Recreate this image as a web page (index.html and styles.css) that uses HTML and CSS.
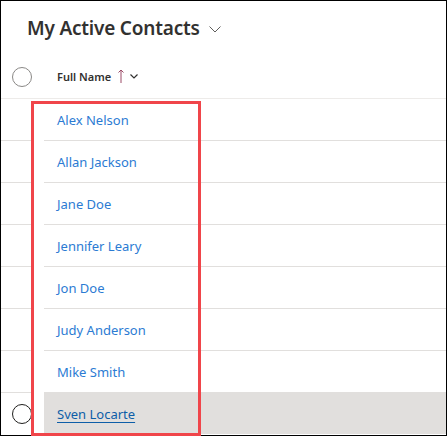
FILE: index.html
```html
<!DOCTYPE html>
<html>
<head>
<meta charset="utf-8">
<link rel="stylesheet" href="styles.css">
</head>
<body>
<div class="frame">
  <div class="title-bar">
    <span class="title">My Active Contacts</span>
    <svg class="title-chev" width="12" height="7" viewBox="0 0 12 7"><path d="M0.5 0.5 L6 6 L11.5 0.5" fill="none" stroke="#605e5c" stroke-width="1"/></svg>
  </div>
  <div class="col-head">
    <div class="check-cell"><span class="circle"></span></div>
    <div class="head-cell">
      <span class="head-label">Full Name</span>
      <svg class="sort-arrow" width="6" height="14" viewBox="0 0 6 14"><path d="M3 14 V1 M0.5 3.5 L3 1 L5.5 3.5" fill="none" stroke="#9b4a66" stroke-width="1"/></svg>
      <svg class="head-chev" width="8" height="5" viewBox="0 0 8 5"><path d="M0.5 0.5 L4 4 L7.5 0.5" fill="none" stroke="#323130" stroke-width="1.2"/></svg>
    </div>
  </div>
  <div class="row"><div class="check-cell"></div><div class="name-cell"><a class="name">Alex Nelson</a></div></div>
  <div class="row"><div class="check-cell"></div><div class="name-cell"><a class="name">Allan Jackson</a></div></div>
  <div class="row"><div class="check-cell"></div><div class="name-cell"><a class="name">Jane Doe</a></div></div>
  <div class="row"><div class="check-cell"></div><div class="name-cell"><a class="name">Jennifer Leary</a></div></div>
  <div class="row"><div class="check-cell"></div><div class="name-cell"><a class="name">Jon Doe</a></div></div>
  <div class="row"><div class="check-cell"></div><div class="name-cell"><a class="name">Judy Anderson</a></div></div>
  <div class="row"><div class="check-cell"></div><div class="name-cell"><a class="name">Mike Smith</a></div></div>
  <div class="row row-hover"><div class="check-cell"><span class="circle circle-dark"></span></div><div class="name-cell"><a class="name name-hover">Sven Locarte</a></div></div>
</div>
<div class="highlight"></div>
</body>
</html>
```

FILE: styles.css
```css
html, body {
  margin: 0;
  padding: 0;
  background: #ffffff;
}
body {
  position: relative;
  width: 448px;
  height: 437px;
  font-family: "Noto Sans", "Open Sans", sans-serif;
  color: #323130;
}
.frame {
  width: 447px;
  height: 436px;
  box-sizing: border-box;
  border: 1px solid #000000;
  display: flex;
  flex-direction: column;
}
.title-bar {
  height: 54px;
  display: flex;
  align-items: center;
  padding-left: 26px;
  gap: 9px;
}
.title {
  font-size: 19px;
  font-weight: 600;
  color: #323130;
  letter-spacing: -0.2px;
}
.title-chev {
  margin-top: 2px;
}
.col-head {
  height: 43px;
  display: flex;
  align-items: stretch;
  border-bottom: 1px solid #edebe9;
}
.check-cell {
  width: 33px;
  margin-right: 10px;
  display: flex;
  align-items: center;
  justify-content: flex-start;
  padding-left: 11px;
  box-sizing: border-box;
  flex: none;
}
.col-head .check-cell {
  width: 43px;
  margin-right: 0;
}
.circle {
  display: block;
  width: 20px;
  height: 20px;
  box-sizing: border-box;
  border: 1px solid #8a8886;
  border-radius: 50%;
}
.circle-dark {
  border-color: #201f1e;
}
.head-cell {
  flex: 1;
  display: flex;
  align-items: center;
  padding-left: 13px;
}
.head-label {
  font-size: 11px;
  font-weight: 600;
  color: #323130;
}
.sort-arrow {
  margin-left: 7px;
  margin-top: -1px;
}
.head-chev {
  margin-left: 6px;
}
.row {
  height: 42px;
  display: flex;
}
.row .check-cell {
  border-bottom: 1px solid #e1dfdd;
}
.name-cell {
  flex: 1;
  display: flex;
  align-items: center;
  padding-left: 13px;
  border-bottom: 1px solid #e1dfdd;
}
.row-hover {
  height: 41px;
}
.row-hover .check-cell,
.row-hover .name-cell {
  border-bottom: none;
}
.row-hover .name-cell {
  background: #e1dfdd;
}
.name {
  font-size: 13px;
  color: #2b7bd3;
  text-decoration: none;
}
.name-hover {
  color: #0d5ea8;
  text-decoration: underline;
  text-underline-offset: 3px;
}
.highlight {
  position: absolute;
  left: 31px;
  top: 101px;
  width: 170px;
  height: 335px;
  box-sizing: border-box;
  border: 3px solid #f0454a;
}
```
